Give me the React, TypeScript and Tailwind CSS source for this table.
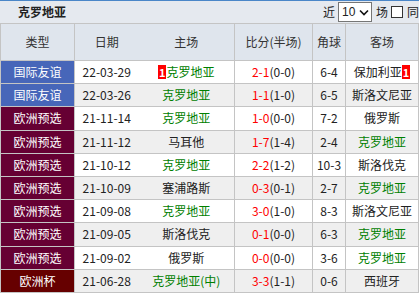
import React from 'react';

type Match = {
  type: string;
  kind: 'friendly' | 'qual' | 'euro';
  date: string;
  home: string;
  homeGreen?: boolean;
  homeRank?: string;
  score: string;
  half: string;
  corner: string;
  away: string;
  awayGreen?: boolean;
  awayRank?: string;
};

const matches: Match[] = [
  { type: '国际友谊', kind: 'friendly', date: '22-03-29', home: '克罗地亚', homeGreen: true, homeRank: '1', score: '2-1', half: '(0-0)', corner: '6-4', away: '保加利亚', awayRank: '1' },
  { type: '国际友谊', kind: 'friendly', date: '22-03-26', home: '克罗地亚', homeGreen: true, score: '1-1', half: '(1-0)', corner: '6-5', away: '斯洛文尼亚' },
  { type: '欧洲预选', kind: 'qual', date: '21-11-14', home: '克罗地亚', homeGreen: true, score: '1-0', half: '(0-0)', corner: '7-2', away: '俄罗斯' },
  { type: '欧洲预选', kind: 'qual', date: '21-11-12', home: '马耳他', score: '1-7', half: '(1-4)', corner: '2-4', away: '克罗地亚', awayGreen: true },
  { type: '欧洲预选', kind: 'qual', date: '21-10-12', home: '克罗地亚', homeGreen: true, score: '2-2', half: '(1-2)', corner: '10-3', away: '斯洛伐克' },
  { type: '欧洲预选', kind: 'qual', date: '21-10-09', home: '塞浦路斯', score: '0-3', half: '(0-1)', corner: '2-7', away: '克罗地亚', awayGreen: true },
  { type: '欧洲预选', kind: 'qual', date: '21-09-08', home: '克罗地亚', homeGreen: true, score: '3-0', half: '(1-0)', corner: '8-3', away: '斯洛文尼亚' },
  { type: '欧洲预选', kind: 'qual', date: '21-09-05', home: '斯洛伐克', score: '0-1', half: '(0-0)', corner: '6-3', away: '克罗地亚', awayGreen: true },
  { type: '欧洲预选', kind: 'qual', date: '21-09-02', home: '俄罗斯', score: '0-0', half: '(0-0)', corner: '3-6', away: '克罗地亚', awayGreen: true },
  { type: '欧洲杯', kind: 'euro', date: '21-06-28', home: '克罗地亚(中)', homeGreen: true, score: '3-3', half: '(1-1)', corner: '0-6', away: '西班牙' },
];

const kindBg = {
  friendly: 'bg-[#4766b9]',
  qual: 'bg-[#660033]',
  euro: 'bg-[#660000]',
};

const Rank = ({ n }: { n: string }) => (
  <span className="inline-block bg-[#ff0000] px-[1px] text-[11px] font-bold leading-[14px] text-white">{n}</span>
);

export default function App() {
  return (
    <div className="h-[294px] w-[419px] overflow-hidden bg-white font-['Noto_Sans_CJK_SC',sans-serif] text-[12px] text-[#222]">
      {/* title bar */}
      <div className="flex h-[23px] items-center justify-between border-t border-[#4a86c8] bg-[#e5e9ef] pl-[18px]">
        <span className="text-[12px] font-bold text-[#222]">克罗地亚</span>
        <div className="flex items-center gap-[3px] text-[12px]">
          <span>近</span>
          <div className="flex h-[20px] w-[34px] items-center justify-between border border-[#767676] bg-white pl-[3px] pr-[2px] font-['Liberation_Sans',sans-serif] text-[12px]">
            <span>10</span>
            <svg width="10" height="7" viewBox="0 0 10 7">
              <path d="M1 1.5 L5 5.5 L9 1.5" fill="none" stroke="#111" strokeWidth="1.6" />
            </svg>
          </div>
          <span className="ml-[1px]">场</span>
          <span className="inline-block h-[12px] w-[12px] border border-[#333] bg-white" />
          <span className="ml-[1px]">同</span>
        </div>
      </div>

      <table className="w-[418px] table-fixed border-collapse">
        <colgroup>
          <col className="w-[74px]" />
          <col className="w-[64px]" />
          <col className="w-[96px]" />
          <col className="w-[78px]" />
          <col className="w-[33px]" />
          <col className="w-[73px]" />
        </colgroup>
        <thead>
          <tr className="h-[37px] bg-[#dfe5ed] text-[12px] text-[#333]">
            <th className="border border-[#c4c4c4] font-normal">类型</th>
            <th className="border-y border-[#c4c4c4] font-normal">日期</th>
            <th className="border-y border-r border-[#c4c4c4] font-normal">主场</th>
            <th className="border border-[#c4c4c4] font-normal">比分(半场)</th>
            <th className="border border-[#c4c4c4] font-normal">角球</th>
            <th className="border border-[#c4c4c4] font-normal">客场</th>
          </tr>
        </thead>
        <tbody>
          {matches.map((m, i) => (
            <tr key={i} className={`h-[23.2px] ${i % 2 === 0 ? 'bg-white' : 'bg-[#efefef]'}`}>
              <td className={`border border-[#c4c4c4] text-center text-white ${kindBg[m.kind]}`}>{m.type}</td>
              <td className="border-y border-[#c4c4c4] text-center">{m.date}</td>
              <td className={`border-y border-r border-[#c4c4c4] text-center ${m.homeGreen ? 'text-[#008000]' : ''}`}>
                {m.homeRank && <Rank n={m.homeRank} />}
                {m.home}
              </td>
              <td className="border border-[#c4c4c4] text-center">
                <span className="text-[#ff0000]">{m.score}</span>
                {m.half}
              </td>
              <td className="border border-[#c4c4c4] text-center">{m.corner}</td>
              <td className={`border border-[#c4c4c4] text-center ${m.awayGreen ? 'text-[#008000]' : ''}`}>
                {m.away}
                {m.awayRank && <Rank n={m.awayRank} />}
              </td>
            </tr>
          ))}
        </tbody>
      </table>
    </div>
  );
}
